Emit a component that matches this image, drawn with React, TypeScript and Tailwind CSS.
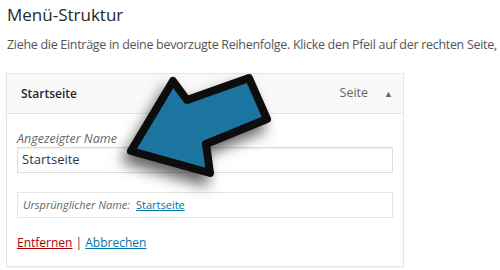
import React from 'react';

function Arrow() {
  return (
    <svg
      className="pointer-events-none absolute left-0 top-0"
      width="500"
      height="270"
      viewBox="0 0 500 270"
    >
      <defs>
        <filter id="sh" x="-30%" y="-30%" width="160%" height="160%">
          <feDropShadow dx="-5" dy="9" stdDeviation="7" floodColor="#000" floodOpacity="0.6" />
        </filter>
      </defs>
      <polygon
        points="131,151 173,81 187,100 249,78 267,119 206,144 210,173"
        fill="#1f74a0"
        stroke="#0a0a0a"
        strokeWidth="8"
        strokeLinejoin="round"
        filter="url(#sh)"
      />
    </svg>
  );
}

export default function App() {
  return (
    <div
      className="relative h-[270px] w-[500px] overflow-hidden bg-white text-[#444]"
      style={{ fontFamily: '"Open Sans", "Noto Sans", sans-serif' }}
    >
      <div className="pl-[7px] pt-[4px]">
        <h2 className="text-[17px] leading-[22px] text-[#23282d]">Menü-Struktur</h2>
        <p className="mt-[11px] whitespace-nowrap text-[12.5px] leading-[16px] tracking-[-0.3px] text-[#555]">
          Ziehe die Einträge in deine bevorzugte Reihenfolge. Klicke den Pfeil auf der rechten Seite,
        </p>
      </div>

      <div className="ml-[6px] mt-[20px] w-[398px] border border-[#e5e5e5] shadow-[0_1px_1px_rgba(0,0,0,0.04)]">
        <div className="flex h-[40px] items-center border-b border-[#e5e5e5] bg-[#f9f9f9] pl-[14px] pr-[10px]">
          <span className="text-[12px] font-semibold text-[#23282d]">Startseite</span>
          <span className="ml-auto text-[12.5px] text-[#666]">Seite</span>
          <span className="ml-[16px] text-[9px] text-[#666]">▲</span>
        </div>
        <div className="px-[10px] pb-[15px] pt-[17px]">
          <div className="text-[12.5px] italic leading-[16px] text-[#666]">Angezeigter Name</div>
          <div className="flex h-[26px] items-center border border-[#ddd] px-[4px] text-[13px] text-[#32373c] shadow-[inset_0_1px_2px_rgba(0,0,0,0.07)]">
            Startseite
          </div>
          <div className="mt-[19px] flex h-[26px] items-center border border-[#e5e5e5] px-[5px] text-[11px]">
            <span className="italic text-[#666]">Ursprünglicher Name:</span>
            <span className="ml-[6px] text-[#0073aa] underline">Startseite</span>
          </div>
          <div className="mt-[17px] text-[12px] leading-[16px]">
            <span className="text-[#a00] underline">Entfernen</span>
            <span className="text-[#444]"> | </span>
            <span className="text-[#0073aa] underline">Abbrechen</span>
          </div>
        </div>
      </div>

      <Arrow />
    </div>
  );
}
